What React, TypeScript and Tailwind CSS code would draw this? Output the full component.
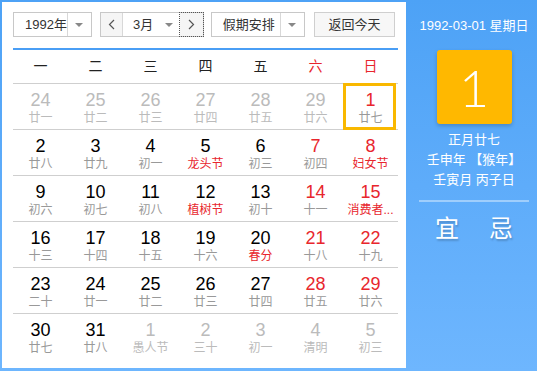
type Day = { n: number; l: string; other?: boolean; fest?: boolean; sel?: boolean }

const rows: Day[][] = [
  [
    { n: 24, l: '廿一', other: true },
    { n: 25, l: '廿二', other: true },
    { n: 26, l: '廿三', other: true },
    { n: 27, l: '廿四', other: true },
    { n: 28, l: '廿五', other: true },
    { n: 29, l: '廿六', other: true },
    { n: 1, l: '廿七', sel: true },
  ],
  [
    { n: 2, l: '廿八' },
    { n: 3, l: '廿九' },
    { n: 4, l: '初一' },
    { n: 5, l: '龙头节', fest: true },
    { n: 6, l: '初三' },
    { n: 7, l: '初四' },
    { n: 8, l: '妇女节', fest: true },
  ],
  [
    { n: 9, l: '初六' },
    { n: 10, l: '初七' },
    { n: 11, l: '初八' },
    { n: 12, l: '植树节', fest: true },
    { n: 13, l: '初十' },
    { n: 14, l: '十一' },
    { n: 15, l: '消费者...', fest: true },
  ],
  [
    { n: 16, l: '十三' },
    { n: 17, l: '十四' },
    { n: 18, l: '十五' },
    { n: 19, l: '十六' },
    { n: 20, l: '春分', fest: true },
    { n: 21, l: '十八' },
    { n: 22, l: '十九' },
  ],
  [
    { n: 23, l: '二十' },
    { n: 24, l: '廿一' },
    { n: 25, l: '廿二' },
    { n: 26, l: '廿三' },
    { n: 27, l: '廿四' },
    { n: 28, l: '廿五' },
    { n: 29, l: '廿六' },
  ],
  [
    { n: 30, l: '廿七' },
    { n: 31, l: '廿八' },
    { n: 1, l: '愚人节', other: true },
    { n: 2, l: '三十', other: true },
    { n: 3, l: '初一', other: true },
    { n: 4, l: '清明', other: true },
    { n: 5, l: '初三', other: true },
  ],
]

const weekdays = ['一', '二', '三', '四', '五', '六', '日']

function Caret() {
  return <span className="block w-0 h-0 border-x-[4px] border-x-transparent border-t-[4px] border-t-[#888]" />
}

export default function App() {
  return (
    <div className="w-[537px] h-[371px] flex bg-gradient-to-b from-[#4da2f6] to-[#6eb6fe] font-['Liberation_Sans','Noto_Sans_CJK_SC',sans-serif] overflow-hidden">
      {/* 左侧日历 */}
      <div className="ml-[2px] mt-[2px] mb-[3px] w-[404px] bg-white px-[11px] pt-[10px]">
        <div className="flex items-center h-[25px] text-[13px] text-[#333] whitespace-nowrap">
          <div className="flex w-[79px] h-[25px] border border-[#c8c8c8] bg-white">
            <span className="flex-1 flex items-center pl-[11px]">1992年</span>
            <span className="w-[24px] border-l border-[#d8d8d8] flex items-center justify-center"><Caret /></span>
          </div>
          <div className="flex w-[105px] h-[25px] ml-[8px] border border-[#c8c8c8]">
            <span className="w-[22px] bg-[#f5f5f5] border-r border-[#d8d8d8] flex items-center justify-center text-[#666]">
              <svg width="7" height="11" viewBox="0 0 7 11"><path d="M6 1 1.5 5.5 6 10" fill="none" stroke="#555" strokeWidth="1.2" /></svg>
            </span>
            <span className="flex-1 flex items-center pl-[10px] bg-white">3月<span className="ml-auto mr-[7px]"><Caret /></span></span>
            <span className="w-[23px] bg-[#f5f5f5] outline outline-1 outline-dotted outline-[#555] flex items-center justify-center">
              <svg width="7" height="11" viewBox="0 0 7 11"><path d="M1 1 5.5 5.5 1 10" fill="none" stroke="#555" strokeWidth="1.2" /></svg>
            </span>
          </div>
          <div className="flex w-[95px] h-[25px] ml-[7px] border border-[#c8c8c8] bg-white">
            <span className="flex-1 flex items-center pl-[11px]">假期安排</span>
            <span className="w-[24px] border-l border-[#d8d8d8] flex items-center justify-center"><Caret /></span>
          </div>
          <button className="w-[82px] h-[25px] ml-[9px] border border-[#cfcfcf] bg-[#f7f7f7] text-[13px] text-[#333]">返回今天</button>
        </div>

        <div className="mt-[11px] h-[1.5px] bg-[#4a9ef5] w-[385px]" />

        <div className="w-[385px] grid grid-cols-7 h-[34px] border-b border-[#cfcfcf] items-center text-[14px]">
          {weekdays.map((w, i) => (
            <span key={w} className={`text-center ${i >= 5 ? 'text-[#e8262d]' : 'text-[#222]'}`}>{w}</span>
          ))}
        </div>

        <div className="w-[385px]">
          {rows.map((row, ri) => (
            <div key={ri} className={`grid grid-cols-7 h-[46px] ${ri < 5 ? 'border-b border-[#cfcfcf]' : ''}`}>
              {row.map((d, ci) => {
                const numCls = d.other ? 'text-[#bbb]' : ci >= 5 ? 'text-[#e8262d]' : 'text-black'
                const lunCls = d.other ? 'text-[#bbb]' : d.fest ? 'text-[#e8262d]' : 'text-[#999]'
                return (
                  <div key={ci} className="relative flex flex-col items-center pt-[6px]">
                    <span className={`text-[18px] leading-[20px] ${numCls}`}>{d.n}</span>
                    <span className={`text-[12px] leading-[16px] whitespace-nowrap ${lunCls}`}>{d.l}</span>
                    {d.sel && <div className="absolute -top-px left-0 w-[53px] h-[47px] border-[3px] border-[#f9b800]" />}
                  </div>
                )
              })}
            </div>
          ))}
        </div>
      </div>

      {/* 右侧详情 */}
      <div className="flex-1 flex flex-col items-center pl-[5px] text-white">
        <div className="mt-[18px] text-[13px] leading-[16px]">1992-03-01 星期日</div>
        <div className="mt-[16px] w-[75px] h-[74px] rounded-[3px] bg-[#ffb800] shadow-[0_2px_4px_rgba(0,0,0,0.2)] flex items-center justify-center">
          <span className="text-[52px] leading-none font-['Lato',sans-serif] font-light">1</span>
        </div>
        <div className="mt-[6px] text-[13px] leading-[20px] text-center">
          <div>正月廿七</div>
          <div>壬申年 【猴年】</div>
          <div>壬寅月 丙子日</div>
        </div>
        <div className="mt-[10px] w-[110px] h-[2px] bg-white/40" />
        <div className="mt-[12px] flex gap-[30px] text-[24px] leading-[30px] [text-shadow:1px_2px_2px_rgba(0,0,0,0.2)]">
          <span>宜</span>
          <span>忌</span>
        </div>
      </div>
    </div>
  )
}
